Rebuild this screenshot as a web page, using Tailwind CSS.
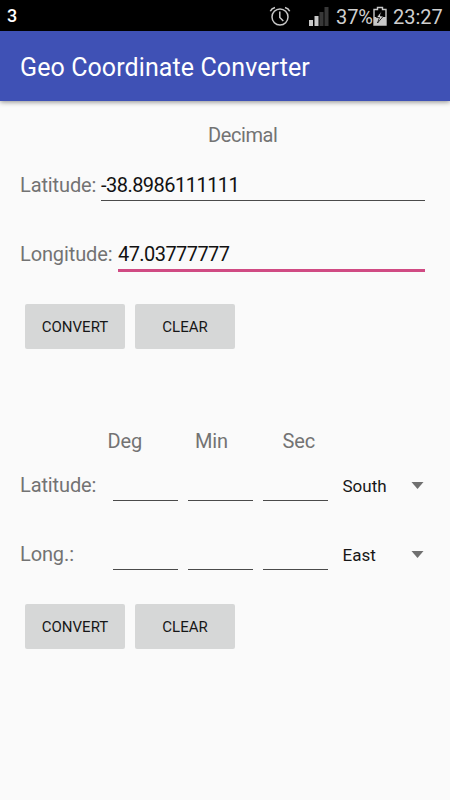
<!DOCTYPE html>
<html lang="en">
<head>
<meta charset="utf-8">
<title>Geo Coordinate Converter</title>
<script src="https://cdn.jsdelivr.net/npm/@tailwindcss/browser@4"></script>
</head>
<body class="flex h-[800px] w-[450px] flex-col overflow-hidden bg-[#fafafa] font-[Roboto,sans-serif] text-[20px] leading-[24px] tracking-[-0.12px] text-[#737373]">
<header class="flex h-[31px] shrink-0 items-center bg-black pr-[7px] pl-[7px] text-[#cfcfcf]">
  <span class="pt-[1px] text-[18px] font-medium text-white">3</span>
  <svg class="ml-auto h-[20px] w-[22px]" viewBox="0 0 22 20" fill="none" stroke="#c8c8c8" stroke-width="1.5"><circle cx="11" cy="11" r="8"/><path d="M10.800 5.500v6l3.500 3.500M1.300 5.200Q2.500 2.300 6 1.400M16 1.400Q19.500 2.300 20.700 5.200"/></svg>
  <svg class="mr-[7px] ml-[18px] h-[20px] w-[20px]" viewBox="0 0 20 20"><path fill="#c8c8c8" d="M0 14h4v6H0zM5.500 10h4v10h-4z"/><path fill="#383838" d="M10.500 6h4v14h-4zM15.500 1h4v19h-4z"/></svg>
  <span class="w-[37px] pt-[2px] text-[20px] tracking-[-0.1px] whitespace-nowrap">37%</span>
  <svg class="h-[20px] w-[14px]" viewBox="0 0 14 20"><path d="M1 3.500h3.500v-2h5v2H13V19H1z" fill="none" stroke="#c8c8c8" stroke-width="1.400"/><path d="M1 11h12v8H1z" fill="#c8c8c8"/><path d="M8.500 5 3.500 11.500h3L4.500 17l6-7H7.300z" fill="#d8d8d8" stroke="#000" stroke-width=".8"/></svg>
  <span class="ml-[6px] w-[50px] pt-[2px] text-[20px] tracking-normal whitespace-nowrap">23:27</span>
</header>
<div class="flex h-[70px] shrink-0 items-center bg-[#3f51b5] pl-[20px] pt-[3px] text-[25px] tracking-[0.1px] text-white shadow-[0_1px_5px_rgba(0,0,0,0.45)]"><h1 class="whitespace-nowrap">Geo Coordinate Converter</h1></div>
<main class="flex flex-col px-[20px] pt-[22px]">
  <div class="h-[24px] pl-[188px] tracking-[-0.4px]">Decimal</div>
  <div class="mt-[19px] flex h-[35px] pr-[5px]">
    <label class="w-[81px] shrink-0 pt-[7px] whitespace-nowrap">Latitude:</label>
    <div class="flex-1 border-b border-[#4a4a4a] pt-[7px] tracking-[-0.53px] text-[#111]">-38.8986111111</div>
  </div>
  <div class="mt-[34px] flex h-[37px] pr-[5px]">
    <label class="w-[98px] shrink-0 pt-[7px] whitespace-nowrap">Longitude:</label>
    <div class="flex-1 border-b-3 border-[#d04a83] pt-[7px] tracking-[-0.57px] text-[#111]">47.03777777</div>
  </div>
  <div class="mt-[32px] flex gap-[10px] pl-[5px] text-[15px] tracking-normal text-[#171717]">
    <button class="h-[45px] w-[100px] rounded-[2px] bg-[#d6d7d7] pt-[1px]">CONVERT</button>
    <button class="h-[45px] w-[100px] rounded-[2px] bg-[#d6d7d7] pt-[1px]">CLEAR</button>
  </div>
  <div class="mt-[80px] flex h-[24px] pl-[87.500px]">
    <span class="w-[87.500px]">Deg</span><span class="w-[87.500px]">Min</span><span>Sec</span>
  </div>
  <div class="mt-[20px] flex h-[28px] pr-[6px]">
    <label class="w-[92.500px] shrink-0 whitespace-nowrap">Latitude:</label>
    <div class="flex gap-[10px]"><i class="w-[65px] border-b border-[#4a4a4a]"></i><i class="w-[65px] border-b border-[#4a4a4a]"></i><i class="w-[65px] border-b border-[#4a4a4a]"></i></div>
    <span class="ml-[15px] pt-[1px] text-[17px] tracking-normal text-[#171717]">South</span>
    <svg class="mt-[9px] ml-auto h-[7px] w-[13px]" viewBox="0 0 13 7"><path d="M.5 0h12l-6 7z" fill="#707070"/></svg>
  </div>
  <div class="mt-[41px] flex h-[28px] pr-[6px]">
    <label class="w-[92.500px] shrink-0 whitespace-nowrap">Long.:</label>
    <div class="flex gap-[10px]"><i class="w-[65px] border-b border-[#4a4a4a]"></i><i class="w-[65px] border-b border-[#4a4a4a]"></i><i class="w-[65px] border-b border-[#4a4a4a]"></i></div>
    <span class="ml-[15px] pt-[1px] text-[17px] tracking-normal text-[#171717]">East</span>
    <svg class="mt-[9px] ml-auto h-[7px] w-[13px]" viewBox="0 0 13 7"><path d="M.5 0h12l-6 7z" fill="#707070"/></svg>
  </div>
  <div class="mt-[34px] flex gap-[10px] pl-[5px] text-[15px] tracking-normal text-[#171717]">
    <button class="h-[45px] w-[100px] rounded-[2px] bg-[#d6d7d7] pt-[1px]">CONVERT</button>
    <button class="h-[45px] w-[100px] rounded-[2px] bg-[#d6d7d7] pt-[1px]">CLEAR</button>
  </div>
</main>
</body>
</html>
